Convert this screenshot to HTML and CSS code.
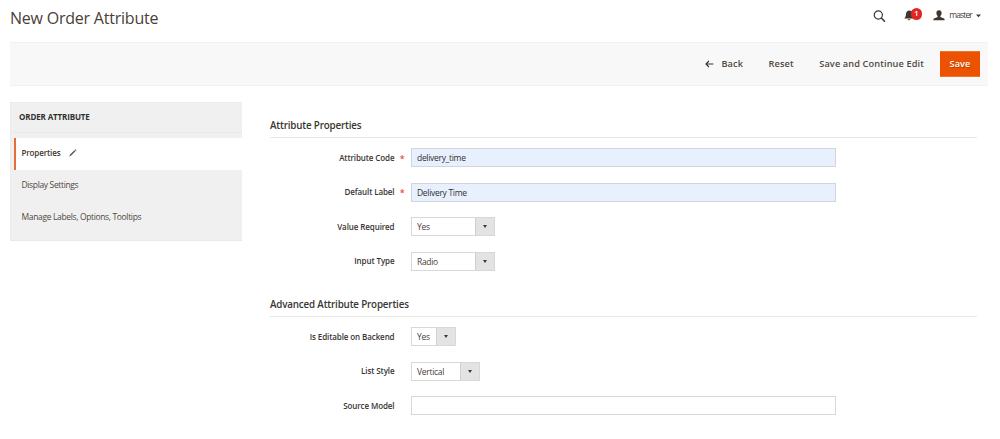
FILE: index.html
```html
<!DOCTYPE html>
<html lang="en">
<head>
<meta charset="utf-8">
<title>New Order Attribute</title>
<link rel="stylesheet" href="styles.css">
</head>
<body>
<header class="header">
  <h1 class="title"><span>New Order Attribute</span></h1>
  <div class="tools">
    <svg class="search" width="13" height="13" viewBox="0 0 13 13"><circle cx="5.300" cy="5" r="4.100" fill="none" stroke="#41362f" stroke-width="1.200"/><path d="M8.300 8l3.200 3.200" stroke="#41362f" stroke-width="1.600" stroke-linecap="round"/></svg>
    <div class="bell">
      <svg width="11" height="11" viewBox="0 0 11 11"><path d="M5 .5c-2 .2-2.900 1.700-3 3.500C1.900 6 1.500 7 .3 8.600h9.400V4C9 2 7.500.5 5 .5zM3.600 9.200h2.800c-.3 1.300-2.500 1.300-2.800 0z" fill="#41362f"/></svg>
      <span class="count">1</span>
    </div>
    <svg class="person" width="12" height="11" viewBox="0 0 12 11"><path d="M6 .2c1.800 0 2.700 1.200 2.600 2.800C8.500 4.500 8 5.500 7.400 6.100v.8c1.200.8 3.900 1 4.200 2.300v1.100H.4V9.200c.3-1.300 3-1.500 4.200-2.300v-.8C4 5.500 3.500 4.500 3.400 3 3.300 1.400 4.200.2 6 .2z" fill="#41362f"/></svg>
    <span class="user">master</span>
    <svg class="caret" width="5" height="4" viewBox="0 0 5 4"><path d="M0 .4h5L2.500 3.300z" fill="#41362f"/></svg>
  </div>
</header>
<div class="actions">
  <button class="action back"><svg width="9" height="8" viewBox="0 0 9 8"><path d="M8.300 4H1M3.900 1L1 4l2.900 3" fill="none" stroke="#41362f" stroke-width="1.200"/></svg><span>Back</span></button>
  <button class="action reset">Reset</button>
  <button class="action continue">Save and Continue Edit</button>
  <button class="action primary">Save</button>
</div>
<div class="columns">
  <nav class="side">
    <div class="side-title"><span>ORDER ATTRIBUTE</span></div>
    <a class="tab active"><span>Properties</span><svg width="8" height="8" viewBox="0 0 8 8"><path d="M.3 7.500l.6-1.700 4.500-4.500 1 1-4.500 4.500zM5.800.9l.6-.6 1.100 1-.6.600z" fill="#5c534d"/></svg></a>
    <a class="tab">Display Settings</a>
    <a class="tab">Manage Labels, Options, Tooltips</a>
  </nav>
  <main class="content">
    <section class="fieldset">
      <h2 class="legend">Attribute Properties</h2>
      <div class="field"><label class="label required">Attribute Code</label><div class="input filled">delivery_time</div></div>
      <div class="field"><label class="label required">Default Label</label><div class="input filled">Delivery Time</div></div>
      <div class="field"><label class="label">Value Required</label><div class="select wide">Yes<i class="arrow"></i></div></div>
      <div class="field"><label class="label">Input Type</label><div class="select wider">Radio<i class="arrow"></i></div></div>
    </section>
    <section class="fieldset last">
      <h2 class="legend">Advanced Attribute Properties</h2>
      <div class="field"><label class="label">Is Editable on Backend</label><div class="select narrow">Yes<i class="arrow"></i></div></div>
      <div class="field"><label class="label">List Style</label><div class="select medium">Vertical<i class="arrow"></i></div></div>
      <div class="field"><label class="label">Source Model</label><div class="input"></div></div>
    </section>
  </main>
</div>
</body>
</html>
```
FILE: styles.css
```css
* { box-sizing: border-box; }
body {
  margin: 0;
  padding: 0 12px 0 10px;
  background: #fff;
  color: #4a403a;
  font: 8.500px/12px "Open Sans", sans-serif;
  letter-spacing: -0.300px;
}
.header { display: flex; justify-content: space-between; height: 41.500px; }
.title { margin: 6px 0 0; font-size: 16px; line-height: 24px; font-weight: 400; letter-spacing: -0.220px; }
.tools { display: flex; align-items: flex-start; padding-right: 7px; }
.search { margin: 10px 18px 0 0; }
.bell { position: relative; width: 18px; height: 13px; margin: 10px 11px 0 0; }
.bell svg { display: block; }
.count {
  position: absolute;
  left: 6.500px;
  top: -2px;
  width: 11.500px;
  height: 11.500px;
  border-radius: 50%;
  background: #e22626;
  color: #fff;
  font-size: 7.500px;
  line-height: 11.500px;
  font-weight: 600;
  letter-spacing: 0;
  text-align: center;
}
.person { margin: 9.500px 4px 0 0; }
.user { margin-top: 9px; font-size: 8.500px; letter-spacing: -0.850px; }
.caret { margin: 13.500px 0 0 4px; }
.actions {
  display: flex;
  align-items: center;
  justify-content: flex-end;
  height: 44px;
  padding-right: 8px;
  background: #f8f8f8;
  border-top: 1px solid #f1f1f1;
  border-bottom: 1px solid #f1f1f1;
}
.action {
  display: flex;
  align-items: center;
  padding: 0;
  border: 0;
  background: none;
  color: #514943;
  font: 600 9.200px/14px "Open Sans", sans-serif;
  letter-spacing: 0.120px;
  white-space: nowrap;
}
.back svg { margin-right: 7px; }
.reset { margin-left: 25.500px; }
.continue { margin-left: 25.500px; }
.primary {
  justify-content: center;
  width: 40px;
  height: 26px;
  margin-left: 16px;
  background: #eb5202;
  color: #fff;
  border: 1px solid #f1722b;
  border-width: 1px 0;
  text-shadow: 0.500px 0.500px 0 rgba(0, 0, 0, 0.250);
}
.columns { display: flex; padding-top: 16.500px; }
.side {
  width: 232px;
  height: 138.500px;
  background: #f0f0f0;
  border: 1px solid #ebebeb;
  border-right: 0;
  border-bottom-color: #e9e9e9;
}
.side-title {
  height: 30px;
  margin-bottom: 4.500px;
  padding: 8px 0 0 8px;
  border-bottom: 1px solid #e9e9e9;
  color: #303030;
  font-size: 8px;
  font-weight: 700;
  letter-spacing: -0.130px;
}
.tab { display: flex; align-items: center; height: 32px; padding: 0 0 2px 10.500px; color: #514943; letter-spacing: -0.350px; }
.active { margin-left: 3px; padding: 0 0 1px 5.500px; border-left: 2px solid #e3703a; background: #fff; font-size: 8px; font-weight: 600; letter-spacing: -0.130px; color: #41362f; }
.active svg { margin-left: 9px; }
.content { width: 707px; margin-left: 28px; padding-top: 16px; }
.fieldset { height: 179px; }
.last { height: auto; }
.legend {
  height: 20px;
  margin: 0 0 10px;
  border-bottom: 1px solid #e8e8e5;
  color: #3a3532;
  font-size: 9.800px;
  line-height: 16px;
  font-weight: 600;
  letter-spacing: -0.170px;
}
.field { display: flex; align-items: center; height: 19px; margin-bottom: 15.500px; }
.label { position: relative; width: 124.500px; margin-right: 16.500px; text-align: right; font-size: 8px; font-weight: 600; letter-spacing: -0.100px; color: #3a3532; }
.required::after {
  content: "*";
  position: absolute;
  right: -10px;
  top: 1px;
  color: #e84a4a;
  font-size: 9px;
}
.input { width: 425px; height: 19px; padding-left: 5px; border: 1px solid #d8d8d8; line-height: 17px; color: #303030; }
.filled { background: #e8f0fe; border-color: #d2d5dc; }
.select { display: flex; justify-content: space-between; height: 19px; padding-left: 5px; border: 1px solid #d8d8d8; line-height: 17px; }
.wide { width: 83.500px; }
.wider { width: 84px; }
.narrow { width: 45px; }
.medium { width: 69px; }
.arrow { display: flex; align-items: center; justify-content: center; width: 19px; border-left: 1px solid #cfcfcf; background: #e3e3e3; }
.arrow::after { content: ""; border: 2px solid transparent; border-top: 3px solid #41362f; border-bottom: 0; }
.last .field:last-child { margin-bottom: 0; }
```
